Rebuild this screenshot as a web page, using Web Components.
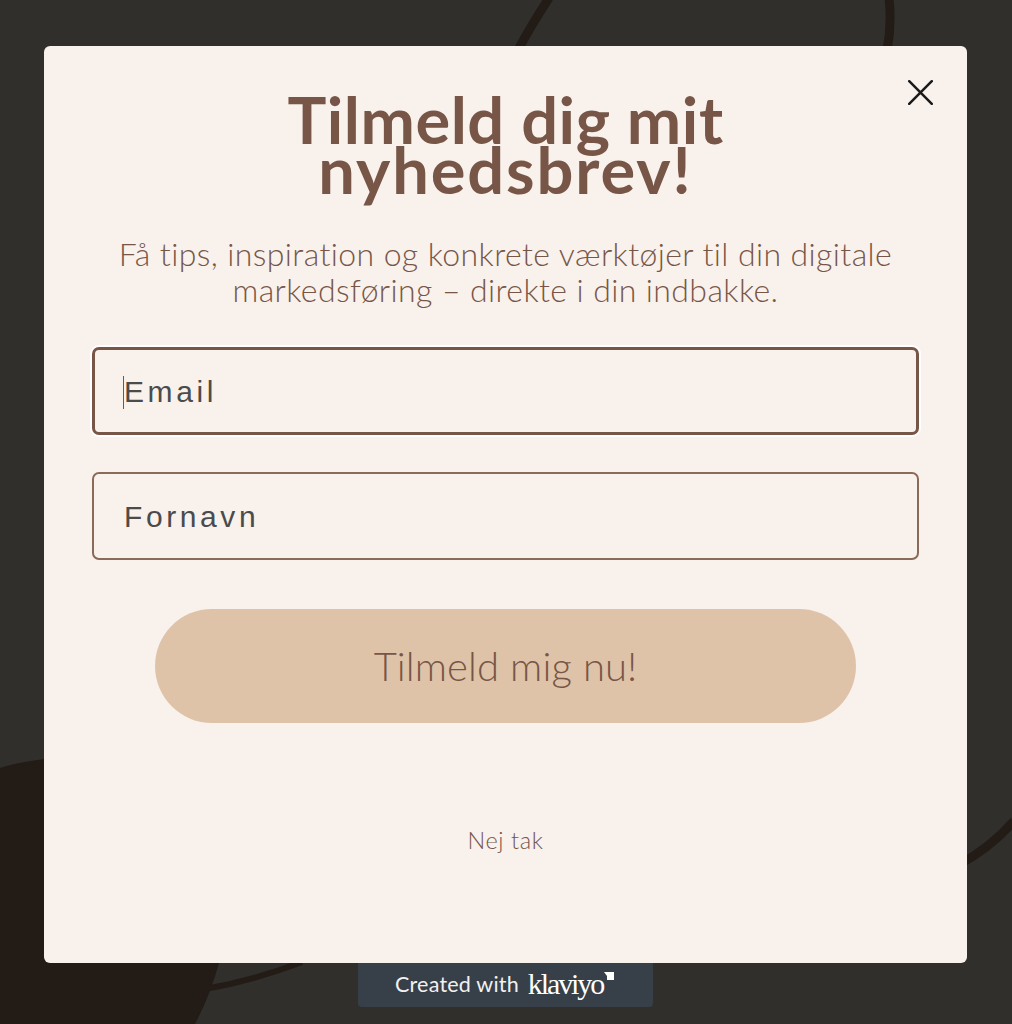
<!DOCTYPE html>
<html lang="da">
<head>
<meta charset="utf-8">
<title>Tilmeld dig mit nyhedsbrev</title>
<style>
  html, body { margin: 0; height: 100%; background: #302f2b; overflow: hidden; }
</style>
</head>
<body>
<signup-backdrop>
  <signup-modal>
    <signup-title>Tilmeld dig mit<br><span style="letter-spacing:1.9px">nyhedsbrev!</span></signup-title>
    <signup-lead>Få tips, inspiration og konkrete værktøjer til din digitale<br>markedsføring – direkte i din indbakke.</signup-lead>
    <signup-field focused>Email</signup-field>
    <signup-field>Fornavn</signup-field>
    <signup-button>Tilmeld mig nu!</signup-button>
    <signup-decline>Nej tak</signup-decline>
  </signup-modal>
  <klaviyo-badge></klaviyo-badge>
</signup-backdrop>

<script>
const GOTHIC = '"Lato", "Open Sans", sans-serif';

function define(name, html) {
  const template = document.createElement('template');
  template.innerHTML = html;
  customElements.define(name, class extends HTMLElement {
    constructor() {
      super();
      this.attachShadow({ mode: 'open' }).appendChild(template.content.cloneNode(true));
    }
  });
}

define('signup-backdrop', `
<style>
  :host { display: flex; flex-direction: column; align-items: flex-start; position: relative; height: 1024px; padding: 46px 0 0 44px; box-sizing: border-box; overflow: hidden; background: #302f2b; }
  .art { position: absolute; inset: 0; width: 1012px; height: 1024px; }
  ::slotted(*) { position: relative; }
</style>
<svg class="art" viewBox="0 0 1012 1024" aria-hidden="true">
  <path d="M0 768 Q22 761 60 757 L300 850 L219 963 Q210 996 195 1024 L0 1024Z" fill="#231c16"/>
  <path d="M205 989 Q255 980 302 962" fill="none" stroke="#231c16" stroke-width="6"/>
  <path d="M519 48 Q532 24 549 -2" fill="none" stroke="#231c16" stroke-width="9"/>
  <path d="M887 50 Q892 25 889 -2" fill="none" stroke="#231c16" stroke-width="9"/>
  <path d="M960 864 Q990 848 1014 821" fill="none" stroke="#231c16" stroke-width="9"/>
</svg>
<slot></slot>`);

define('signup-modal', `
<style>
  :host { display: flex; flex-direction: column; align-items: center; width: 923px; height: 917px; box-sizing: border-box; padding: 48px 48px 0; background: #f9f1ec; border-radius: 6px; }
  .close { position: absolute; top: 34px; right: 34px; width: 25px; height: 25px; }
</style>
<svg class="close" viewBox="0 0 25 25" aria-label="Luk">
  <path d="M1.2 1.2 L23.8 23.8 M23.8 1.2 L1.2 23.8" fill="none" stroke="#1a1a1a" stroke-width="2.5" stroke-linecap="round"/>
</svg>
<slot></slot>`);

define('signup-title', `
<style>
  :host { display: block; width: 100%; font: 700 65px/50px ${GOTHIC}; letter-spacing: .55px; color: #775647; text-align: center; }
</style>
<slot></slot>`);

define('signup-lead', `
<style>
  :host { display: block; width: 100%; margin: 42px 0 39px; font: 300 32px/36px ${GOTHIC}; letter-spacing: .4px; color: #775647; text-align: center; white-space: nowrap; }
</style>
<slot></slot>`);

define('signup-field', `
<style>
  :host { display: flex; align-items: center; position: relative; width: 100%; height: 88px; box-sizing: border-box; margin-bottom: 37px; padding: 2px 0 0 30px; border: 2px solid #8a6a59; border-radius: 7px; font: 400 30px "Liberation Sans", Arial, sans-serif; letter-spacing: 3.6px; color: #4b4b4b; }
  :host([focused]) { border-width: 3px; padding-left: 29px; border-color: #775647; box-shadow: 0 0 0 2px #fff; }
  .caret { display: none; position: absolute; left: 28px; top: 26px; width: 1px; height: 33px; background: #775647; }
  :host([focused]) .caret { display: block; }
</style>
<span class="caret"></span><slot></slot>`);

define('signup-button', `
<style>
  :host { display: flex; align-items: center; justify-content: center; width: 701px; height: 114px; margin-top: 12px; border-radius: 57px; background: #dfc3a8; color: #775647; font: 300 40px ${GOTHIC}; letter-spacing: .1px; }
</style>
<slot></slot>`);

define('signup-decline', `
<style>
  :host { display: block; margin-top: 103px; font: 300 23.5px/28px ${GOTHIC}; letter-spacing: .6px; color: #775647; }
</style>
<slot></slot>`);

define('klaviyo-badge', `
<style>
  :host { display: flex; align-items: center; gap: 9px; margin-left: 314px; width: 295px; height: 44px; box-sizing: border-box; padding: 0 0 3px 37px; background: #373f48; border-radius: 0 0 4px 4px; color: #f1f1f1; font: 400 21.5px "Lato", sans-serif; letter-spacing: .2px; }
  .brand { position: relative; font: 400 30px/30px "Liberation Serif", serif; letter-spacing: -2.1px; color: #fff; padding-right: 11px; }
  svg { position: absolute; right: 0; top: 3px; width: 10px; height: 8px; }
</style>
<span>Created with</span>
<span class="brand">klaviyo<svg viewBox="0 0 10 8"><path d="M0 0H10V8H3V4Z" fill="#fff"/></svg></span>`);
</script>
</body>
</html>
